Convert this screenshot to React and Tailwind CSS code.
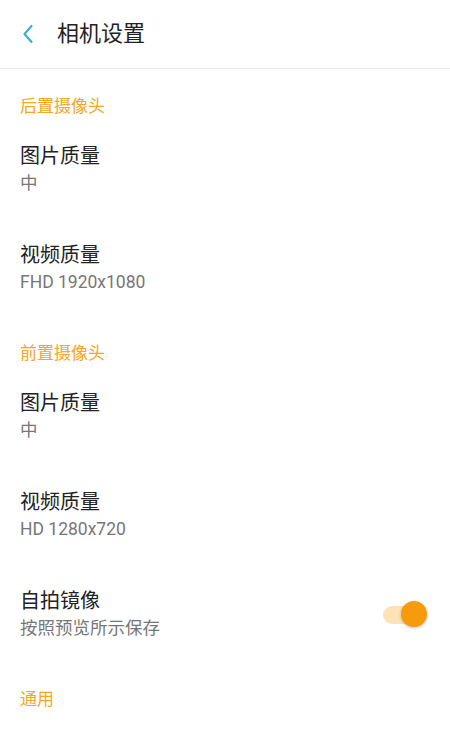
import React from 'react';

const font = { fontFamily: 'Roboto, "Noto Sans CJK SC", "Noto Sans", sans-serif' };

function SectionTitle({ children }) {
  return <div className="px-5 pt-[26px] pb-[1px] text-[17px] leading-[22px] text-[#f5a623]">{children}</div>;
}

function Row({ title, value, right }) {
  return (
    <div className="flex items-center justify-between px-5 py-[12px] h-[99px]">
      <div>
        <div className="text-[20px] leading-[28px] text-[#222]">{title}</div>
        <div className="text-[17.5px] leading-[22px] text-[#777] mt-[2px]">{value}</div>
      </div>
      {right}
    </div>
  );
}

function Toggle() {
  return (
    <div className="relative w-[44px] h-[26px] mr-[3px] mt-[2px]">
      <div className="absolute left-0 top-[5px] w-[38px] h-[18px] rounded-full bg-[#fde3b6]" />
      <div className="absolute right-0 top-0 w-[26px] h-[26px] rounded-full bg-[#f79a0c] shadow-[0_1px_3px_rgba(0,0,0,0.25)]" />
    </div>
  );
}

export default function App() {
  return (
    <div className="w-[450px] h-[730px] bg-white overflow-hidden" style={font}>
      <div className="h-[69px] flex items-center border-b border-[#e6e6e6]">
        <svg width="12" height="20" viewBox="0 0 12 20" className="ml-[22px]">
          <path d="M9.5 2 L2.5 10 L9.5 18" fill="none" stroke="#45a9dc" strokeWidth="2.2" strokeLinecap="round" strokeLinejoin="round" />
        </svg>
        <div className="ml-[23px] text-[22px] text-[#222] leading-none">相机设置</div>
      </div>
      <SectionTitle>后置摄像头</SectionTitle>
      <Row title="图片质量" value="中" />
      <Row title="视频质量" value="FHD 1920x1080" />
      <SectionTitle>前置摄像头</SectionTitle>
      <Row title="图片质量" value="中" />
      <Row title="视频质量" value="HD 1280x720" />
      <Row title="自拍镜像" value="按照预览所示保存" right={<Toggle />} />
      <SectionTitle>通用</SectionTitle>
    </div>
  );
}
